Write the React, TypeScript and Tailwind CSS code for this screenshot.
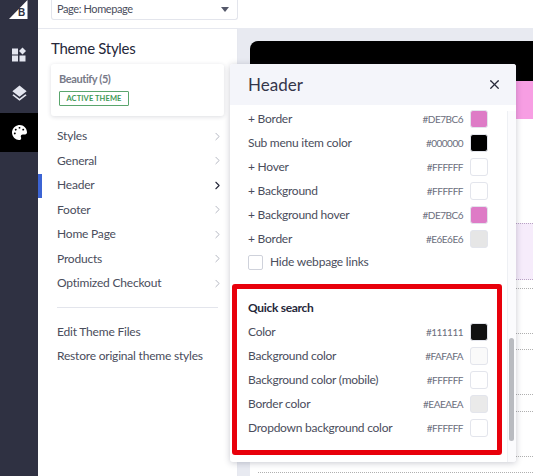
import { ChevronRight, X } from "lucide-react"
import { FaPalette } from "react-icons/fa"
import { MdLayers } from "react-icons/md"

const FONT = "font-['Lato','Noto_Sans',sans-serif]"

const menuItems = ["Styles", "General", "Header", "Footer", "Home Page", "Products", "Optimized Checkout"]

const topRows = [
  { label: "+ Border", hex: "#DE7BC6", color: "bg-[#de7bc6]" },
  { label: "Sub menu item color", hex: "#000000", color: "bg-black" },
  { label: "+ Hover", hex: "#FFFFFF", color: "bg-white" },
  { label: "+ Background", hex: "#FFFFFF", color: "bg-white" },
  { label: "+ Background hover", hex: "#DE7BC6", color: "bg-[#de7bc6]" },
  { label: "+ Border", hex: "#E6E6E6", color: "bg-[#e6e6e6]" },
]

const searchRows = [
  { label: "Color", hex: "#111111", color: "bg-[#111111]" },
  { label: "Background color", hex: "#FAFAFA", color: "bg-[#fafafa]" },
  { label: "Background color (mobile)", hex: "#FFFFFF", color: "bg-white" },
  { label: "Border color", hex: "#EAEAEA", color: "bg-[#eaeaea]" },
  { label: "Dropdown background color", hex: "#FFFFFF", color: "bg-white" },
]

function ColorRow({ label, hex, color }: { label: string; hex: string; color: string }) {
  return (
    <div className="flex items-center justify-between h-6">
      <span className="text-[12px] tracking-[-0.25px] text-[#4a4d5c]">{label}</span>
      <div className="flex items-center gap-[7px]">
        <span className="text-[10px] tracking-[-0.5px] text-[#6b6e7c]">{hex}</span>
        <span className={`w-[18px] h-[18px] rounded-[3px] border border-[#e3e5ec] ${color}`} />
      </div>
    </div>
  )
}

function Sidebar() {
  return (
    <div className="w-[38px] shrink-0 bg-[#2f3142] flex flex-col">
      <div className="h-[35px] flex justify-center items-start">
        <svg width="20" height="19" viewBox="0 0 20 19">
          <polygon points="18.5,0 18.5,19 0,19" fill="#fff" />
          <text x="9" y="15.5" fontSize="10" fontWeight="700" fontFamily="Liberation Sans" fill="#2f3142">
            B
          </text>
        </svg>
      </div>
      <div className="h-[39px] flex items-center justify-center text-[#e4e6f0]">
        <svg width="16" height="16" viewBox="0 0 16 16" fill="currentColor">
          <rect x="1" y="8.5" width="6" height="6" />
          <rect x="8.5" y="8.5" width="6" height="6" />
          <rect x="1" y="1.5" width="6" height="6" />
          <polygon points="11.5,0.5 15,4 11.5,7.5 8,4" />
        </svg>
      </div>
      <div className="h-[39px] flex items-center justify-center text-[#e4e6f0]">
        <MdLayers size={19} />
      </div>
      <div className="h-[39px] flex items-center justify-center bg-black text-white">
        <FaPalette size={15} />
      </div>
    </div>
  )
}

function ThemePanel() {
  return (
    <div className="w-[200px] shrink-0 bg-white border-r border-t border-[#e6e8ef] pl-[13px] pr-[13px] pt-[9px] relative">
      <h1 className="text-[15px] tracking-[-0.3px] leading-5 text-[#26283a]">Theme Styles</h1>
      <div className="mt-[6px] h-[52px] rounded-[3px] bg-white shadow-[0_1px_4px_rgba(40,45,70,0.16)] px-[8px] pt-[5px]">
        <div className="text-[11px] tracking-[-0.4px] leading-5 font-bold text-[#777a88]">Beautify (5)</div>
        <div className="mt-[2px] w-[70px] h-[15px] flex items-center justify-center border border-[#5aa56d] rounded-[1px] text-[7.5px] font-bold text-[#3e9a56] tracking-[0.1px]">
          ACTIVE THEME
        </div>
      </div>
      <div className="mt-[8px] pl-[6px]">
        {menuItems.map((item) => {
          const active = item === "Header"
          return (
            <div key={item} className="h-[24.5px] flex items-center justify-between text-[12px] tracking-[-0.2px] text-[#4a4d5c]">
              <span>{item}</span>
              <ChevronRight size={13} strokeWidth={active ? 2 : 1.5} className={active ? "text-[#26283a]" : "text-[#a4a7b4]"} />
            </div>
          )
        })}
      </div>
      <div className="mx-[6px] mt-[11px] border-t border-[#e3e5ec]" />
      <div className="mt-[12px] pl-[6px] text-[12px] tracking-[-0.2px] text-[#4a4d5c]">
        <div className="h-[24.5px] flex items-center">Edit Theme Files</div>
        <div className="h-[24.5px] flex items-center">Restore original theme styles</div>
      </div>
      <div className="absolute left-0 top-[145px] w-1 h-6 bg-[#3c64d4]" />
    </div>
  )
}

function Preview() {
  return (
    <div className="flex-1 bg-[#e8eaf1] pl-3 pt-[13px] overflow-hidden">
      <div className="h-[40px] bg-black rounded-tl-[8px]" />
      <div className="h-[38px] bg-[#f79ee3]" />
      <div className="bg-white h-[400px] pt-[104px]">
        <div className="h-[57px] bg-[#f6ecfb] border-y border-dotted border-[#b9a3c4]" />
        <div className="ml-[8px] mt-[8px] h-[45px] border-t border-dotted border-[#b0b0b0]" />
        <div className="ml-[8px] h-[16px] border-t border-dotted border-[#b0b0b0]" />
        <div className="ml-[8px] h-[45px] border-t border-dotted border-[#b0b0b0]" />
        <div className="ml-[8px] h-[17px] border-t border-dotted border-[#b0b0b0]" />
        <div className="ml-[8px] h-[45px] border-t border-dotted border-[#b0b0b0]" />
        <div className="ml-[8px] h-[16px] border-t border-dotted border-[#b0b0b0]" />
        <div className="ml-[8px] border-t border-dotted border-[#b0b0b0]" />
      </div>
    </div>
  )
}

function HeaderModal() {
  return (
    <div className="absolute left-[230px] top-[64px] w-[286px] h-[398px] bg-white rounded-[3px] shadow-[0_1px_6px_rgba(40,45,70,0.25)] overflow-hidden">
      <div className="h-[41px] bg-[#f4f5fa] flex items-center justify-between pl-[18px] pr-[14px]">
        <span className="text-[17px] text-[#34364a]">Header</span>
        <X size={15} strokeWidth={2} className="text-[#26283a]" />
      </div>
      {/* Scrollbar */}
      <div className="absolute right-0 top-[47px] bottom-0 w-[9px] bg-[#fbfbfd] border-l border-[#eef0f4]" />
      <div className="absolute right-[2px] top-[274px] w-[5px] h-[103px] rounded-full bg-[#b9bbc0]" />
      <div className="relative pl-[18px] pr-[28px] pt-[2px]">
        {topRows.map((row, i) => (
          <ColorRow key={i} {...row} />
        ))}
        <div className="flex items-center gap-[7px] h-[22px]">
          <span className="w-[15px] h-[15px] rounded-[2px] border border-[#cfd2db] bg-white" />
          <span className="text-[12px] tracking-[-0.2px] text-[#4a4d5c]">Hide webpage links</span>
        </div>
      </div>
      <div className="relative ml-[2px] mt-[11px] w-[270px] h-[171px] bg-white border-[5px] border-[#e8000b] rounded-[3px] pl-[11px] pr-[9px] pt-[7px]">
        <div className="h-6 flex items-center text-[12px] tracking-[-0.3px] font-bold text-[#26283a]">Quick search</div>
        {searchRows.map((row) => (
          <ColorRow key={row.label} {...row} />
        ))}
      </div>
    </div>
  )
}

export default function App() {
  return (
    <div className={`relative flex w-[533px] h-[476px] overflow-hidden bg-white ${FONT}`}>
      <Sidebar />
      <div className="flex-1 flex flex-col">
        <div className="h-[28px] shrink-0 bg-white pl-[13px]">
          <div className="w-[187px] h-[20px] flex items-center justify-between pl-[5px] pr-[8px] border border-t-0 border-[#e3e5ec] rounded-b-[3px] text-[11px] tracking-[-0.4px] text-[#4a4d5c]">
            <span>Page: Homepage</span>
            <span className="w-0 h-0 border-l-[4px] border-r-[4px] border-t-[5px] border-l-transparent border-r-transparent border-t-[#55586a]" />
          </div>
        </div>
        <div className="flex-1 flex min-h-0">
          <ThemePanel />
          <Preview />
        </div>
      </div>
      <HeaderModal />
    </div>
  )
}
